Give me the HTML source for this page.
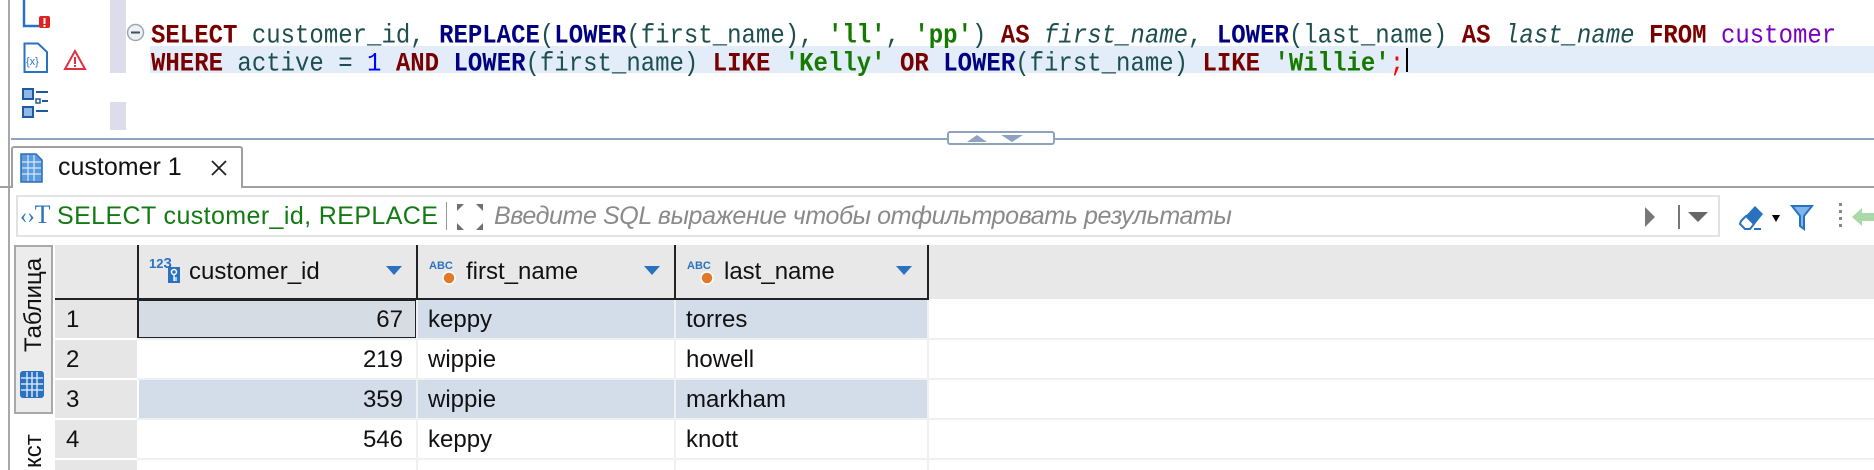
<!DOCTYPE html>
<html><head><meta charset="utf-8"><style>
*{margin:0;padding:0;box-sizing:border-box}
body{width:1874px;height:470px;background:#fff;position:relative;overflow:hidden;font-family:"Liberation Sans",sans-serif}
.a{position:absolute}
.code{position:absolute;left:151px;font-family:"Liberation Mono","DejaVu Sans Mono",monospace;font-size:24px;white-space:pre;color:#1d4f4f;line-height:28px;transform:scaleY(1.12);transform-origin:left center}
.k{color:#7a0000;font-weight:bold}.f{color:#000080;font-weight:bold}.s{color:#167a00;font-weight:bold}.n{color:#0000ff}.t{color:#7b00c0}.i{font-style:italic}
.cell{position:absolute;font-size:24px;line-height:40px;color:#111}
</style></head><body>
<div class="a" style="left:8px;top:0;width:2px;height:470px;background:#a8a8a8"></div>
<div class="a" style="left:110px;top:0;width:16px;height:73px;background:#dcdcea"></div>
<div class="a" style="left:110px;top:102px;width:16px;height:28px;background:#dcdcea"></div>
<div class="a" style="left:150px;top:46px;width:1724px;height:27px;background:#e3edfa"></div>
<svg class="a" style="left:22px;top:0" width="30" height="30"><path d="M2 0V26H18" fill="none" stroke="#2a72c0" stroke-width="2.5"/><rect x="17" y="16" width="11" height="12" rx="2" fill="#d22"/><rect x="21.5" y="18" width="2" height="6" fill="#fff"/><rect x="21.5" y="25" width="2" height="2" fill="#fff"/></svg>
<svg class="a" style="left:23px;top:42px" width="28" height="32"><path d="M1.5 1.5H15L24 10V30H1.5Z" fill="#fff" stroke="#2a72c0" stroke-width="2"/><text x="3" y="23" font-size="11" fill="#2a72c0" font-family="Liberation Sans">{x}</text></svg>
<svg class="a" style="left:63px;top:49px" width="24" height="22"><path d="M12 2L22 20H2Z" fill="none" stroke="#e03040" stroke-width="2"/><rect x="11" y="8" width="2" height="7" fill="#e03040"/><rect x="11" y="16" width="2" height="2" fill="#e03040"/></svg>
<svg class="a" style="left:21px;top:87px" width="30" height="32"><rect x="2" y="2" width="10" height="10" fill="#8fb8e8" stroke="#1d5a9e" stroke-width="2"/><rect x="2" y="20" width="10" height="10" fill="#8fb8e8" stroke="#1d5a9e" stroke-width="2"/><path d="M15 5H27M15 24H27M21 14H27" stroke="#1d5a9e" stroke-width="2"/><rect x="15" y="12" width="4" height="4" fill="none" stroke="#1d5a9e" stroke-width="1.5"/></svg>
<svg class="a" style="left:126px;top:23px" width="19" height="19"><circle cx="9.5" cy="9.5" r="8" fill="#eef1f5" stroke="#9aa6b4" stroke-width="1.5"/><rect x="5" y="8.5" width="9" height="2" fill="#405060"/></svg>
<div class="code" style="top:23px"><span class="k">SELECT</span> customer_id, <span class="f">REPLACE</span>(<span class="f">LOWER</span>(first_name), <span class="s">'ll'</span>, <span class="s">'pp'</span>) <span class="k">AS</span> <span class="i">first_name</span>, <span class="f">LOWER</span>(last_name) <span class="k">AS</span> <span class="i">last_name</span> <span class="k">FROM</span> <span class="t">customer</span></div>
<div class="code" style="top:51px"><span class="k">WHERE</span> active = <span class="n">1</span> <span class="k">AND</span> <span class="f">LOWER</span>(first_name) <span class="k">LIKE</span> <span class="s">'Kelly'</span> <span class="k">OR</span> <span class="f">LOWER</span>(first_name) <span class="k">LIKE</span> <span class="s">'Willie'</span><span style="color:#f00">;</span></div>
<div class="a" style="left:1406px;top:48px;width:2px;height:24px;background:#000"></div>
<div class="a" style="left:11px;top:138px;width:1863px;height:2px;background:#8fa3bf"></div>
<div class="a" style="left:947px;top:131px;width:108px;height:14px;background:#fff;border:2px solid #8fa3bf;border-radius:3px"></div>
<svg class="a" style="left:965px;top:133px" width="75" height="10"><path d="M2 9L12 2L22 9Z M36 2H58L47 9Z" fill="#8fa3bf"/></svg>
<div class="a" style="left:0;top:186px;width:1874px;height:2px;background:#a0a0a0"></div>
<div class="a" style="left:11px;top:146px;width:232px;height:42px;background:#fff;border:2px solid #a0a0a0;border-bottom:none;border-radius:3px 3px 0 0"></div>
<svg class="a" style="left:20px;top:153px" width="24" height="30"><path d="M1 1H16L22 7V29H1Z" fill="#5a9be0" stroke="#2c6fb6" stroke-width="1.5"/><path d="M2 9H21M2 15H21M2 21H21M8 2V28M14 2V28" stroke="#d8e8f8" stroke-width="1.2"/></svg>
<div class="a" style="left:58px;top:151px;font-size:25px;line-height:32px;color:#111">customer 1</div>
<svg class="a" style="left:210px;top:159px" width="18" height="18"><path d="M2 2L16 16M16 2L2 16" stroke="#222" stroke-width="1.8"/></svg>
<div class="a" style="left:16px;top:195px;width:1704px;height:42px;border:2px solid #e2e2e2;background:#fff"></div>
<div class="a" style="left:20px;top:200px;font-family:'Liberation Serif',serif;font-size:22px;color:#2a72c0;line-height:30px">‹›<span style="font-size:26px">T</span></div>
<div class="a" style="left:57px;top:199px;font-size:25px;line-height:34px;color:#137a13;letter-spacing:0.4px">SELECT customer_id, REPLACE</div>
<div class="a" style="left:446px;top:202px;width:1px;height:28px;background:#999"></div>
<svg class="a" style="left:455px;top:202px" width="30" height="30"><path d="M2 2H9L2 9ZM28 2H21L28 9ZM2 28H9L2 21ZM28 28H21L28 21Z" fill="#707070"/></svg>
<div class="a" style="left:494px;top:199px;font-size:25px;line-height:34px;color:#8a8a8a;font-style:italic;letter-spacing:-0.4px">Введите SQL выражение чтобы отфильтровать результаты</div>
<svg class="a" style="left:1640px;top:203px" width="75" height="28"><path d="M5 4L15 14L5 24Z" fill="#777"/><rect x="38" y="2" width="2" height="24" fill="#777"/><path d="M48 9H68L58 19Z" fill="#666"/></svg>
<svg class="a" style="left:1736px;top:201px" width="100" height="32"><path d="M5 20L19 5L27 13L15 28H10L5 23Z" fill="#2a72c0"/><path d="M5 20L10 15L18 23L14 28H9L4 23Z" fill="#fff" stroke="#2a72c0" stroke-width="2"/><rect x="18" y="27" width="7" height="2" fill="#2a72c0"/><path d="M36 14H44L40 21Z" fill="#000"/><path d="M56 5H76L68 15V28L64 25V15Z" fill="#7fb6ea" stroke="#2a72c0" stroke-width="2"/></svg>
<div class="a" style="left:1839px;top:203px;width:3px;height:28px;background:repeating-linear-gradient(#888 0 3px,transparent 3px 7px)"></div>
<svg class="a" style="left:1852px;top:205px" width="22" height="24"><path d="M0 12L10 3V8H22V16H10V21Z" fill="#a9d9a9"/></svg>
<div class="a" style="left:55px;top:245px;width:1819px;height:54px;background:#e8e8e8"></div>
<div class="a" style="left:55px;top:298px;width:873px;height:2px;background:#222"></div>
<div class="a" style="left:137px;top:245px;width:2px;height:55px;background:#222"></div>
<div class="a" style="left:416px;top:245px;width:2px;height:55px;background:#222"></div>
<div class="a" style="left:674px;top:245px;width:2px;height:55px;background:#222"></div>
<div class="a" style="left:927px;top:245px;width:2px;height:55px;background:#222"></div>
<div class="a" style="left:14px;top:245px;width:39px;height:169px;background:#ececec;border:2px solid #a8a8a8"></div>
<div class="a" style="left:20px;top:352px;transform:rotate(-90deg);transform-origin:left top;font-size:24px;color:#111;line-height:28px;white-space:nowrap">Таблица</div>
<svg class="a" style="left:19px;top:370px" width="28" height="30"><rect x="1" y="1" width="24" height="27" rx="3" fill="#2a72c0"/><path d="M2 8H24M2 14H24M2 20H24M8 2V27M13 2V27M18 2V27" stroke="#cfe3f7" stroke-width="1.5"/></svg>
<div class="a" style="left:20px;top:468px;transform:rotate(-90deg);transform-origin:left top;font-size:24px;color:#111;line-height:28px">кст</div>
<div class="a" style="left:55px;top:300px;width:82px;height:170px;background:#e6e6e6"></div>
<div class="a" style="left:139px;top:300px;width:789px;height:38px;background:#d3dde9"></div>
<div class="a" style="left:139px;top:380px;width:789px;height:38px;background:#d3dde9"></div>
<div class="a" style="left:137px;top:299px;width:280px;height:40px;border:2px solid #222;background:#d6dce4"></div>
<div class="a" style="left:55px;top:338px;width:1819px;height:2px;background:#f0f0f0"></div>
<div class="a" style="left:55px;top:378px;width:1819px;height:2px;background:#f0f0f0"></div>
<div class="a" style="left:55px;top:418px;width:1819px;height:2px;background:#f0f0f0"></div>
<div class="a" style="left:55px;top:458px;width:1819px;height:2px;background:#f0f0f0"></div>
<div class="a" style="left:55px;top:338px;width:82px;height:2px;background:#fff"></div>
<div class="a" style="left:55px;top:378px;width:82px;height:2px;background:#fff"></div>
<div class="a" style="left:55px;top:418px;width:82px;height:2px;background:#fff"></div>
<div class="a" style="left:55px;top:458px;width:82px;height:2px;background:#fff"></div>
<div class="a" style="left:416px;top:300px;width:2px;height:170px;background:#f0f0f0"></div>
<div class="a" style="left:674px;top:300px;width:2px;height:170px;background:#f0f0f0"></div>
<div class="a" style="left:927px;top:300px;width:2px;height:170px;background:#f0f0f0"></div>
<div class="a" style="left:149px;top:257px;font-size:13px;font-weight:bold;color:#2a72c0;line-height:14px">12<span style="font-size:15px">3</span></div>
<svg class="a" style="left:168px;top:267px" width="12" height="16"><rect x="0" y="0" width="12" height="16" fill="#2a72c0"/><circle cx="6" cy="5" r="2.5" fill="none" stroke="#fff" stroke-width="1.5"/><path d="M6 7V14M6 11H9M6 13H9" stroke="#fff" stroke-width="1.3"/></svg>
<div class="cell" style="left:189px;top:252px">customer_id</div>
<svg class="a" style="left:386px;top:266px" width="16" height="10"><path d="M0 0H16L8 9Z" fill="#2a72c0"/></svg>
<div class="a" style="left:429px;top:260px;font-size:11px;font-weight:bold;color:#2a72c0">ABC</div>
<svg class="a" style="left:442px;top:271px" width="14" height="14"><circle cx="7" cy="7" r="6" fill="#e07a2a" stroke="#fff" stroke-width="1.5"/></svg>
<div class="cell" style="left:466px;top:252px">first_name</div>
<svg class="a" style="left:644px;top:266px" width="16" height="10"><path d="M0 0H16L8 9Z" fill="#2a72c0"/></svg>
<div class="a" style="left:687px;top:260px;font-size:11px;font-weight:bold;color:#2a72c0">ABC</div>
<svg class="a" style="left:700px;top:271px" width="14" height="14"><circle cx="7" cy="7" r="6" fill="#e07a2a" stroke="#fff" stroke-width="1.5"/></svg>
<div class="cell" style="left:724px;top:252px">last_name</div>
<svg class="a" style="left:896px;top:266px" width="16" height="10"><path d="M0 0H16L8 9Z" fill="#2a72c0"/></svg>
<div class="cell" style="left:66px;top:300px">1</div>
<div class="cell" style="left:66px;top:340px">2</div>
<div class="cell" style="left:66px;top:380px">3</div>
<div class="cell" style="left:66px;top:420px">4</div>
<div class="cell" style="left:139px;width:264px;text-align:right;top:300px">67</div>
<div class="cell" style="left:139px;width:264px;text-align:right;top:340px">219</div>
<div class="cell" style="left:139px;width:264px;text-align:right;top:380px">359</div>
<div class="cell" style="left:139px;width:264px;text-align:right;top:420px">546</div>
<div class="cell" style="left:428px;top:300px">keppy</div>
<div class="cell" style="left:428px;top:340px">wippie</div>
<div class="cell" style="left:428px;top:380px">wippie</div>
<div class="cell" style="left:428px;top:420px">keppy</div>
<div class="cell" style="left:686px;top:300px">torres</div>
<div class="cell" style="left:686px;top:340px">howell</div>
<div class="cell" style="left:686px;top:380px">markham</div>
<div class="cell" style="left:686px;top:420px">knott</div>
</body></html>
